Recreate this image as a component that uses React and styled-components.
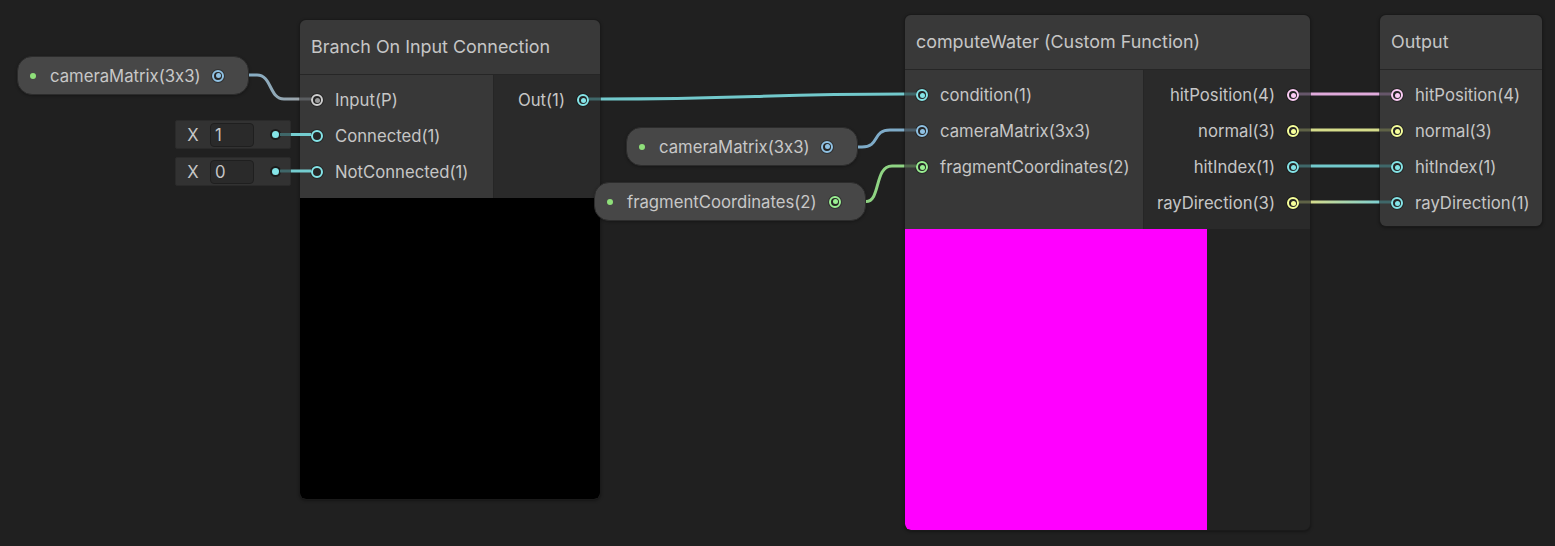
import React from "react";
import styled, { createGlobalStyle } from "styled-components";

const C = {
  bool: "#cfcfcf",
  v1: "#84e4e7",
  v2: "#9aef92",
  v3: "#f6ff9a",
  v4: "#fbcbf4",
  m3: "#8fc1e3",
};

const Global = createGlobalStyle`
  html, body { margin: 0; padding: 0; background: #202020; }
  body {
    font-family: Inter, "Noto Sans", sans-serif;
    font-feature-settings: "calt" 0;
    -webkit-font-smoothing: antialiased;
  }
`;

const Canvas = styled.div`
  position: relative;
  width: 1555px;
  height: 546px;
  overflow: hidden;
  background: #202020;
`;

const Node = styled.div`
  position: absolute;
  left: ${(p) => p.$x}px;
  top: ${(p) => p.$y}px;
  width: ${(p) => p.$w}px;
  height: ${(p) => p.$h}px;
  box-sizing: border-box;
  border: 1px solid #1a1a1a;
  border-radius: 7px;
  background: #222222;
  display: flex;
  flex-direction: column;
  overflow: hidden;
  box-shadow: 0 1px 3px rgba(0, 0, 0, 0.35);
`;

const Header = styled.div`
  height: 55px;
  flex: none;
  display: flex;
  align-items: center;
  padding-left: 11px;
  padding-bottom: 2px;
  box-sizing: border-box;
  background: #393939;
  border-bottom: 1px solid #262626;
  color: #c6c6c6;
  font-size: 17.9px;
`;

const Body = styled.div`
  display: flex;
  flex: none;
`;

const Column = styled.div`
  width: ${(p) => (p.$w ? `${p.$w}px` : "auto")};
  flex: ${(p) => (p.$w ? "none" : 1)};
  box-sizing: border-box;
  background: ${(p) => (p.$out ? "#2a2a2a" : "#383838")};
  padding: 7px 0 8px;
  display: flex;
  flex-direction: column;
  align-items: ${(p) => (p.$out ? "flex-end" : "flex-start")};
  border-left: ${(p) => (p.$out ? "1px solid #262626" : "none")};
`;

const PortRow = styled.div`
  height: 36px;
  display: flex;
  align-items: center;
  gap: 12px;
  flex-direction: ${(p) => (p.$out ? "row-reverse" : "row")};
  padding: ${(p) => (p.$out ? "0 11px 0 0" : "0 0 0 11px")};
  color: #c6c6c6;
  font-size: 16.7px;
  white-space: nowrap;
`;

const Ring = styled.span`
  width: 12px;
  height: 12px;
  box-sizing: border-box;
  border-radius: 50%;
  border: 2px solid ${(p) => p.$c};
  background: #262626;
  display: flex;
  align-items: center;
  justify-content: center;
  flex: none;
  box-shadow: 0 0 0 1px rgba(0, 0, 0, 0.3);
  &::after {
    content: "";
    width: 5px;
    height: 5px;
    border-radius: 50%;
    background: ${(p) => (p.$dot ? p.$dot : "transparent")};
  }
`;

const Preview = styled.div`
  flex: 1;
  width: ${(p) => (p.$w ? `${p.$w}px` : "auto")};
  background: ${(p) => p.$bg};
  border-radius: 0 0 ${(p) => (p.$w ? "0" : "6px")} 6px;
`;

const Pill = styled.div`
  position: absolute;
  left: ${(p) => p.$x}px;
  top: ${(p) => p.$y}px;
  width: ${(p) => p.$w}px;
  height: 39px;
  box-sizing: border-box;
  border-radius: 15px;
  background: #474747;
  border: 1px solid #2c2c2c;
  display: flex;
  align-items: center;
  padding: 0 24px 0 12px;
  color: #c8c8c8;
  font-size: 16.7px;
  white-space: nowrap;
  box-shadow: 0 1px 3px rgba(0, 0, 0, 0.3);
`;

const GreenDot = styled.span`
  width: 6px;
  height: 6px;
  border-radius: 50%;
  background: #8fe07a;
  margin-right: 14px;
  flex: none;
`;

const PillLabel = styled.span`
  flex: 1;
`;

const XBox = styled.div`
  position: absolute;
  left: 175px;
  top: ${(p) => p.$y}px;
  width: 116px;
  height: 29px;
  box-sizing: border-box;
  background: #323232;
  border: 1px solid #2a2a2a;
  border-radius: 2px;
  display: flex;
  align-items: center;
`;

const XLabel = styled.span`
  width: 34px;
  text-align: center;
  color: #c6c6c6;
  font-size: 16.7px;
`;

const XInput = styled.div`
  width: 44px;
  height: 24px;
  box-sizing: border-box;
  background: #2a2a2a;
  border: 1px solid #1f1f1f;
  border-radius: 4px;
  padding-left: 4px;
  line-height: 22px;
  color: #c6c6c6;
  font-size: 16.7px;
`;

const XPort = styled.span`
  width: 7px;
  height: 7px;
  border-radius: 50%;
  background: ${C.v1};
  box-shadow: 0 0 0 2px #1b1b1b;
  margin-left: 18px;
  flex: none;
`;

const WireLayer = styled.svg`
  position: absolute;
  left: 0;
  top: 0;
  z-index: 5;
  pointer-events: none;
  overflow: visible;
`;

const Port = ({ label, color, dot, out }) => (
  <PortRow $out={out}>
    <Ring $c={color} $dot={dot} />
    <span>{label}</span>
  </PortRow>
);

const dim = {
  grey: "#5a5d60",
  cyan: "#3f6769",
  blue: "#4c5e6a",
  green: "#51694d",
  yellow: "#5f6246",
  pink: "#66566a",
};

const Wires = () => (
  <WireLayer width="1555" height="546" viewBox="0 0 1555 546">
    <defs>
      <linearGradient id="gA" gradientUnits="userSpaceOnUse" x1="249" y1="0" x2="299" y2="0">
        <stop offset="0" stopColor="#86aec6" />
        <stop offset="1" stopColor="#9aa3a9" />
      </linearGradient>
      <linearGradient id="gR" gradientUnits="userSpaceOnUse" x1="1311" y1="0" x2="1379" y2="0">
        <stop offset="0" stopColor="#d4db8c" />
        <stop offset="1" stopColor="#7fd0d0" />
      </linearGradient>
    </defs>
    <g fill="none" strokeWidth="3" strokeLinecap="butt">
      <path d="M249 75 L257 75 C272 75 269 99 284 99 L299 99" stroke="url(#gA)" />
      <path d="M299 99 L311 99" stroke={dim.grey} />
      <path d="M280 134.5 L291 134.5" stroke={dim.cyan} />
      <path d="M291 134.5 L311 134.5" stroke="#74cdd0" />
      <path d="M280 171 L291 171" stroke={dim.cyan} />
      <path d="M291 171 L311 171" stroke="#74cdd0" />
      <path d="M589 99 L601 99" stroke={dim.cyan} />
      <path d="M601 99 C750 99 760 94 904 94" stroke="#72c9cc" />
      <path d="M904 94 L916 94" stroke={dim.cyan} />
      <path d="M858 147 L862 147 C880 147 872 130 890 130 L904 130" stroke="#7eabc8" />
      <path d="M904 130 L916 130" stroke={dim.blue} />
      <path d="M866 201.5 C881 201.5 874 166 892 166 L904 166" stroke="#8fd483" />
      <path d="M904 166 L916 166" stroke={dim.green} />
      <path d="M1299 94 L1311 94" stroke={dim.pink} />
      <path d="M1311 94 L1379 94" stroke="#e0aadb" />
      <path d="M1379 94 L1391 94" stroke={dim.pink} />
      <path d="M1299 130 L1311 130" stroke={dim.yellow} />
      <path d="M1311 130 L1379 130" stroke="#d5dc8b" />
      <path d="M1379 130 L1391 130" stroke={dim.yellow} />
      <path d="M1299 166 L1311 166" stroke={dim.cyan} />
      <path d="M1311 166 L1379 166" stroke="#72c9cc" />
      <path d="M1379 166 L1391 166" stroke={dim.cyan} />
      <path d="M1299 202 L1311 202" stroke={dim.yellow} />
      <path d="M1311 202 L1379 202" stroke="url(#gR)" />
      <path d="M1379 202 L1391 202" stroke={dim.cyan} />
    </g>
  </WireLayer>
);

export default function App() {
  return (
    <Canvas>
      <Global />

      <Pill $x={17} $y={56} $w={232}>
        <GreenDot />
        <PillLabel>cameraMatrix(3x3)</PillLabel>
        <Ring $c={C.m3} $dot={C.m3} />
      </Pill>

      <XBox $y={120}>
        <XLabel>X</XLabel>
        <XInput>1</XInput>
        <XPort />
      </XBox>
      <XBox $y={157}>
        <XLabel>X</XLabel>
        <XInput>0</XInput>
        <XPort />
      </XBox>

      <Node $x={299} $y={19} $w={302} $h={481}>
        <Header>Branch On Input Connection</Header>
        <Body>
          <Column $w={193}>
            <Port label="Input(P)" color={C.bool} dot="#9a9a9a" />
            <Port label="Connected(1)" color={C.v1} />
            <Port label="NotConnected(1)" color={C.v1} />
          </Column>
          <Column $out>
            <Port out label="Out(1)" color={C.v1} dot={C.v1} />
          </Column>
        </Body>
        <Preview $bg="#000000" />
      </Node>

      <Pill $x={626} $y={127} $w={232}>
        <GreenDot />
        <PillLabel>cameraMatrix(3x3)</PillLabel>
        <Ring $c={C.m3} $dot={C.m3} />
      </Pill>
      <Pill $x={594} $y={182} $w={272}>
        <GreenDot />
        <PillLabel>fragmentCoordinates(2)</PillLabel>
        <Ring $c={C.v2} $dot={C.v2} />
      </Pill>

      <Node $x={904} $y={14} $w={407} $h={517}>
        <Header>computeWater (Custom Function)</Header>
        <Body>
          <Column $w={238}>
            <Port label="condition(1)" color={C.v1} dot={C.v1} />
            <Port label="cameraMatrix(3x3)" color={C.m3} dot={C.m3} />
            <Port label="fragmentCoordinates(2)" color={C.v2} dot={C.v2} />
          </Column>
          <Column $out>
            <Port out label="hitPosition(4)" color={C.v4} dot={C.v4} />
            <Port out label="normal(3)" color={C.v3} dot={C.v3} />
            <Port out label="hitIndex(1)" color={C.v1} dot={C.v1} />
            <Port out label="rayDirection(3)" color={C.v3} dot={C.v3} />
          </Column>
        </Body>
        <Preview $bg="#ff00ff" $w={302} />
      </Node>

      <Node $x={1379} $y={14} $w={164} $h={213}>
        <Header>Output</Header>
        <Body>
          <Column>
            <Port label="hitPosition(4)" color={C.v4} dot={C.v4} />
            <Port label="normal(3)" color={C.v3} dot={C.v3} />
            <Port label="hitIndex(1)" color={C.v1} dot={C.v1} />
            <Port label="rayDirection(1)" color={C.v1} dot={C.v1} />
          </Column>
        </Body>
      </Node>

      <Wires />
    </Canvas>
  );
}
